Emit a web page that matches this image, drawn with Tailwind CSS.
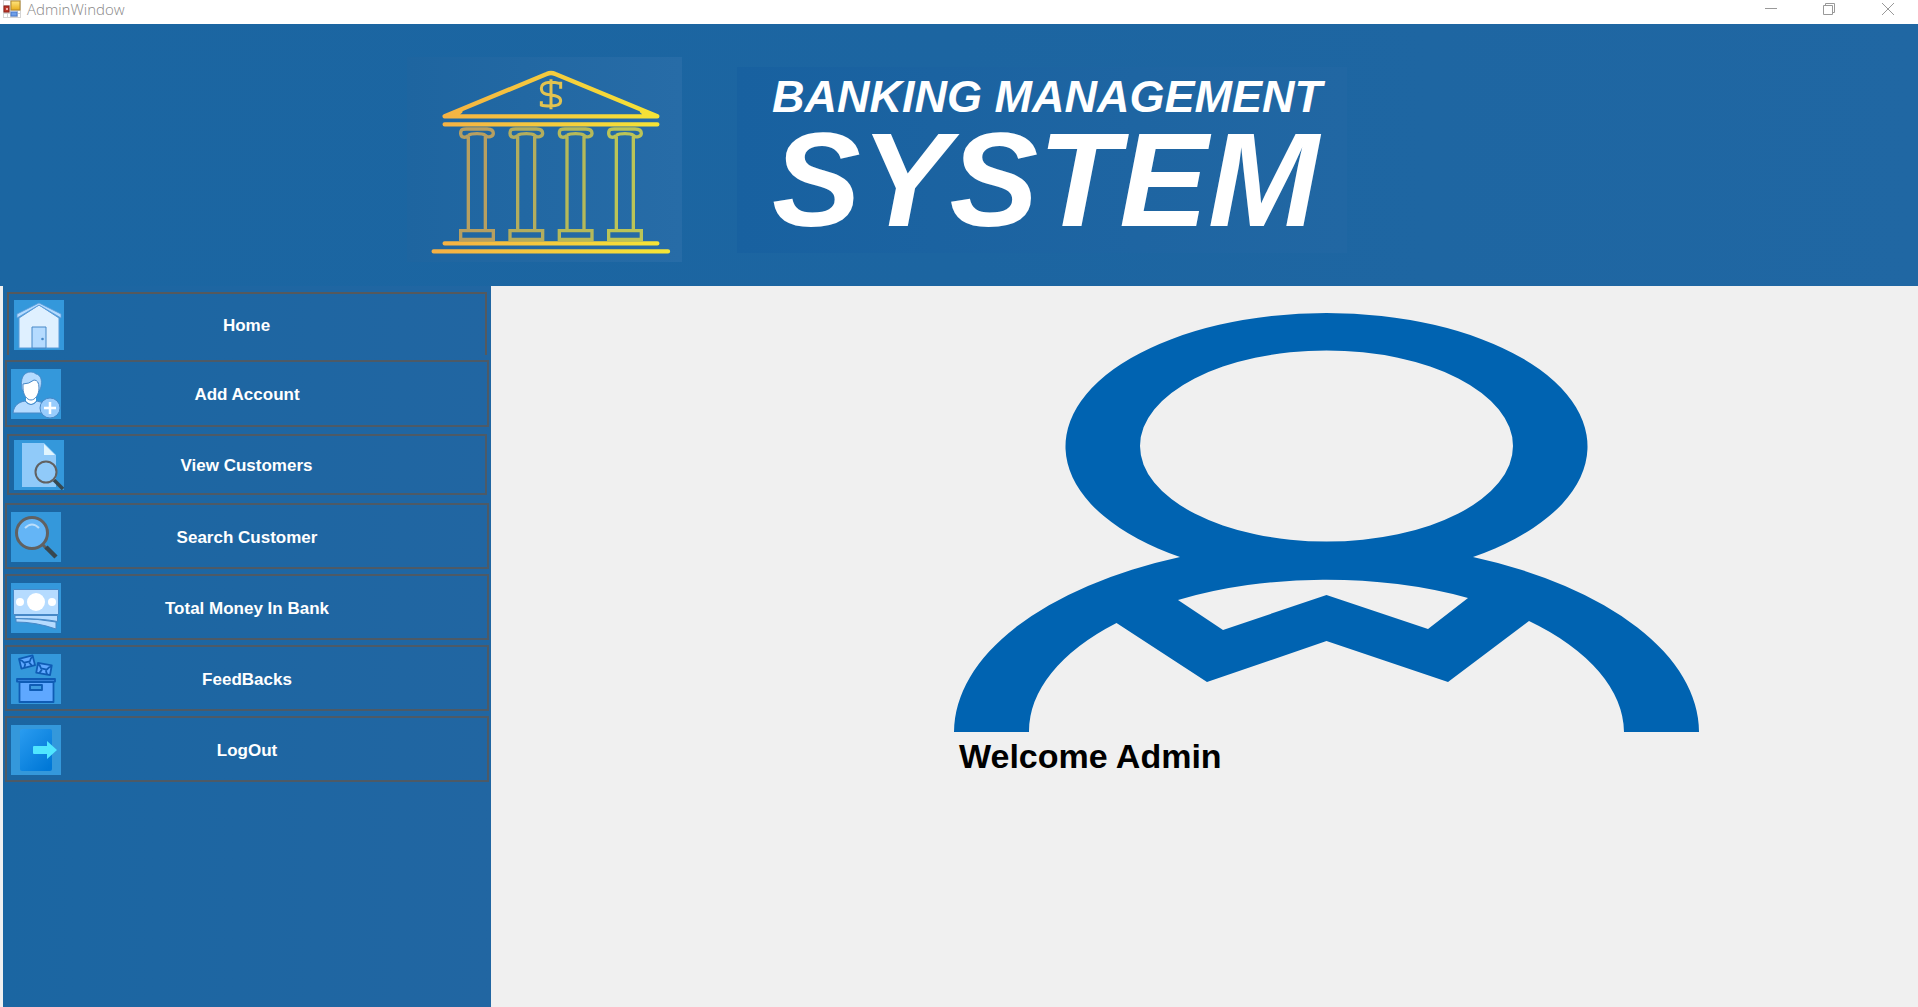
<!DOCTYPE html>
<html lang="en">
<head>
<meta charset="utf-8">
<title>AdminWindow</title>
<script src="https://cdn.jsdelivr.net/npm/@tailwindcss/browser@4"></script>
</head>
<body class="flex min-h-screen flex-col bg-[#f0f0f0] font-['Liberation_Sans',Arial,sans-serif]">

<div class="flex h-6 items-start justify-between bg-white">
  <div class="flex items-start gap-1.5 pl-[3px]">
    <svg class="h-[18px] w-[18px]" viewBox="0 0 18 18" aria-hidden="true">
      <rect width="18" height="18" fill="#d4d4d4"/>
      <path d="M1 1h6v4H1zM1 14h3v3H1zM5 14h2v3H5zM8 11h6v1H8zM15 11h2v2h-2zM15 14h2v3h-2z" fill="#fff"/>
      <rect x="8" y="1" width="9" height="9" fill="url(#gold)" stroke="#b5892b"/>
      <rect x="1" y="6" width="5" height="6" fill="#c0392b" stroke="#8f2018"/><rect x="3" y="8" width="2" height="2" fill="#f3b0a8"/>
      <rect x="8" y="12" width="6" height="4" fill="#6f9fe8" stroke="#4879cc"/>
      <defs><linearGradient id="gold" x2="0" y2="1"><stop stop-color="#ffe680"/><stop offset="1" stop-color="#e9ae1c"/></linearGradient></defs>
    </svg>
    <span class="font-['Open_Sans',sans-serif] text-[15px] font-light leading-[18px] text-[#888]">AdminWindow</span>
  </div>
  <div class="flex text-[#999]">
    <button class="grid h-[18px] w-[58px] place-items-center" aria-label="Minimize"><svg class="size-3" viewBox="0 0 12 12" fill="none" stroke="currentColor"><path d="M0 5.500h12"/></svg></button>
    <button class="grid h-[18px] w-[58px] place-items-center" aria-label="Restore"><svg class="size-3" viewBox="0 0 12 12" fill="none" stroke="currentColor"><path d="M.5 2.500h9v9h-9zM2.500 2.500v-2h9v9h-2"/></svg></button>
    <button class="grid h-[18px] w-[60px] place-items-center" aria-label="Close"><svg class="size-3" viewBox="0 0 12 12" fill="none" stroke="currentColor"><path d="M0 0l12 12M12 0L0 12"/></svg></button>
  </div>
</div>

<header class="flex h-[262px] shrink-0 items-start bg-linear-to-r from-[#1b66a2] via-[#1c65a1] to-[#2067a3] pl-[407px] pt-[33px]">
  <svg class="h-[205px] w-[275px] shrink-0 bg-linear-to-r from-[#1e65a0] to-[#276ca7]" viewBox="20 52 825 615" fill="none" stroke="url(#amber)" role="img" aria-label="Bank">
    <defs>
      <linearGradient id="amber" gradientUnits="userSpaceOnUse" x1="100" y1="0" x2="800" y2="0"><stop stop-color="#f5b044"/><stop offset="1" stop-color="#f5e636"/></linearGradient>
    </defs>
    <g stroke-width="13" stroke-linecap="round" stroke-linejoin="round">
      <path d="M133 230H771L465 103Q452 97 439 103L133 230M165 225L180 215M738 225L725 215"/>
      <path d="M133 254H771M133 611H771M100 635H803"/>
    </g>
    <g stroke-width="10" opacity=".75">
      <path d="M204 571V291M255 571V291M204 287C196 296 181 295 181 281S190 268 200 268H260C271 268 279 271 279 281S263 296 255 287Q248 282 230 282T204 287M181 573H279V599H181Z" stroke="#e9b24c"/>
      <path transform="translate(148)" d="M204 571V291M255 571V291M204 287C196 296 181 295 181 281S190 268 200 268H260C271 268 279 271 279 281S263 296 255 287Q248 282 230 282T204 287M181 573H279V599H181Z" stroke="#e3c447"/>
      <path transform="translate(296)" d="M204 571V291M255 571V291M204 287C196 296 181 295 181 281S190 268 200 268H260C271 268 279 271 279 281S263 296 255 287Q248 282 230 282T204 287M181 573H279V599H181Z" stroke="#e6d441"/>
      <path transform="translate(444)" d="M204 571V291M255 571V291M204 287C196 296 181 295 181 281S190 268 200 268H260C271 268 279 271 279 281S263 296 255 287Q248 282 230 282T204 287M181 573H279V599H181Z" stroke="#ede23d"/>
    </g>
    <path d="M452 119V209M481 147V131H477Q466 128 448 128Q423 130 423 146C423 163 438 164 452 166S481 170 481 184C481 196 468 199 450 199Q430 199 423 196V185" stroke="#e2c350" stroke-width="9"/>
  </svg>
  <h1 class="ml-[55px] mt-[10px] h-[186px] w-[610px] shrink-0 whitespace-nowrap bg-linear-to-r from-[#1861a0] to-[#2167a3] pl-[35px] pt-2 font-bold italic text-white">
    <span class="block text-[45px] leading-[44px]">BANKING MANAGEMENT</span>
    <span class="block text-[133px] leading-[122px]">SYSTEM</span>
  </h1>
</header>

<div class="flex flex-1">
  <nav class="ml-[3px] flex w-[488px] shrink-0 flex-col bg-linear-to-r from-[#1b66a2] to-[#2166a2] px-[2px] pt-[6px] text-[17px] font-bold text-white" aria-label="Main">
    <button class="mx-[2px] mb-[5px] flex h-[63px] items-center border-2 border-b-0 border-[#55595d] pl-[5px] pr-[56px]">
      <svg class="size-[50px] shrink-0 bg-[#3498db]" viewBox="0 0 50 50"><path d="M5 18L25 5l20 13v30H5z" fill="#dff0ff" stroke="#5a9bd8"/><path d="M3 18L25 5l22 13v-4L25 3 3 14z" fill="#b5dbff" stroke="#5a9bd8" stroke-width=".8"/><path d="M18 48V27h14v21z" fill="#b5dbff" stroke="#4788c7"/><circle cx="28.500" cy="39" r="1.300" fill="#4788c7"/></svg>
      <span class="flex-1 pt-[2px]">Home</span>
    </button>
    <button class="mb-[7px] flex h-[67px] items-center border-2 border-[#4d5a66] pl-1 pr-[54px]">
      <svg class="size-[50px] shrink-0 bg-[#3498db]" viewBox="0 0 50 50"><path d="M2 44C3 36 8 33 14 32q6 7 12 0 7 1 10 5v7z" fill="#b5dbff" stroke="#4788c7"/><path d="M15 29v3q5 6 10 0v-3z" fill="#fff"/><path d="M11 21C9 10 12 3 20 3q3 0 5 2c5 1 7 7 4 16z" fill="#b5dbff" stroke="#4788c7" stroke-width=".8"/><path d="M12 15q6 0 11-4 5 0 5 8c0 7-4 12-8 12s-8-5-8-12z" fill="#fff" stroke="#4788c7"/><circle cx="39" cy="39" r="10" fill="#98ccfd" stroke="#4788c7"/><path d="M39 33v12M33 39h12" stroke="#fff" stroke-width="2.500"/></svg>
      <span class="flex-1 pt-[2px]">Add Account</span>
    </button>
    <button class="mx-[2px] mb-2 flex h-[61px] items-center border-2 border-[#4d5a66] pl-[5px] pr-[56px]">
      <svg class="size-[50px] shrink-0 bg-[#3498db]" viewBox="0 0 50 50"><path d="M8 3h22l12 12v32H8z" fill="#90caf9"/><path d="M30 4v11h11z" fill="#e1f5fe"/><path d="M40 40l9 9" stroke="#37474f" stroke-width="3.500"/><circle cx="32" cy="32" r="10.500" fill="#90caf9" stroke="#616161" stroke-width="2"/></svg>
      <span class="flex-1 pt-[2px]">View Customers</span>
    </button>
    <button class="mb-[5px] flex h-[66px] items-center border-2 border-[#4d5a66] pl-1 pr-[54px] pt-[2px]">
      <svg class="size-[50px] shrink-0 bg-[#3498db]" viewBox="0 0 50 50"><path d="M31 32l5 5" stroke="#616161" stroke-width="3"/><path d="M35 35l10 10" stroke="#37474f" stroke-width="4.500"/><circle cx="21" cy="21" r="15.500" fill="#64b5f6" stroke="#616161" stroke-width="3"/><path d="M14 16q7-7 14 0" fill="none" stroke="#bbdefb" stroke-width="2"/></svg>
      <span class="flex-1 pt-[2px]">Search Customer</span>
    </button>
    <button class="mb-[5px] flex h-[66px] items-center border-2 border-[#4d5a66] pl-1 pr-[54px] pt-[2px]">
      <svg class="size-[50px] shrink-0 bg-[#3498db]" viewBox="0 0 50 50"><path d="M5 35.500q22 0 40 3.500v7Q25 39 5 39z" fill="#b5dbff" stroke="#4788c7"/><path d="M4 32.500h42.500v6Q32 35.500 4 35.500z" fill="#b5dbff" stroke="#4788c7"/><path d="M2.500 6.500h45v25h-45z" fill="#b5dbff" stroke="#4788c7"/><circle cx="25" cy="19" r="9" fill="#fff"/><circle cx="9" cy="19" r="4" fill="#fff"/><circle cx="41" cy="19" r="4" fill="#fff"/></svg>
      <span class="flex-1 pt-[2px]">Total Money In Bank</span>
    </button>
    <button class="mb-[5px] flex h-[66px] items-center border-2 border-[#4d5a66] pl-1 pr-[54px] pt-[2px]">
      <svg class="size-[50px] shrink-0 bg-[#3498db]" viewBox="0 0 50 50"><g fill="#5fa8ff" stroke="#0f5cb5" stroke-width="1.800" stroke-linejoin="round"><path d="M8.500 28h34v20h-34z"/><path d="M6 25h38v2.500H6z"/><path d="M19 31h12v5H19z" fill="#3f9be0"/><g transform="rotate(-14 16 8)"><path d="M9 3h14v10H9z"/><path d="M9 4q3 1 4 4h6q1-3 4-4M12 13l2-4M20 13l-2-4" fill="none"/></g><g transform="rotate(10 33 15)"><path d="M26 10h14v10H26z"/><path d="M26 11q3 1 4 4h6q1-3 4-4M29 20l2-4M37 20l-2-4" fill="none"/></g></g></svg>
      <span class="flex-1 pt-[2px]">FeedBacks</span>
    </button>
    <button class="flex h-[66px] items-center border-2 border-[#4d5a66] pl-1 pr-[54px] pt-[2px]">
      <svg class="size-[50px] shrink-0 bg-[#3498db]" viewBox="0 0 50 50"><defs><linearGradient id="door" x2=".8" y2="1"><stop stop-color="#2a9cf0"/><stop offset="1" stop-color="#0078d7"/></linearGradient></defs><rect x="9" y="4" width="32" height="42" rx="2" fill="url(#door)"/><path d="M22 22q0-1 1-1h13v-5l10 9-10 9v-5H23q-1 0-1-1z" fill="#50e6ff"/></svg>
      <span class="flex-1 pt-[2px]">LogOut</span>
    </button>
  </nav>

  <main class="flex-1 pl-[463px] pt-[26px]">
    <svg class="h-[420px] w-[745px]" viewBox="0 0 745 420" fill="#0063b1" role="img" aria-label="Administrator">
      <path fill-rule="evenodd" d="M226 245A261 133.500 0 1 1 519 245A372.500 191 0 0 1 745 420H670A298 153 0 0 0 575 309L494 370 372.500 329 253 370 162.500 311A298 153 0 0 0 75 420H0A372.500 191 0 0 1 226 245ZM186 134a186.500 95.500 0 1 0 373 0a186.500 95.500 0 1 0-373 0ZM224 288L269 318 372.500 283 474 317 514 286A298 153 0 0 0 224 288Z"/>
    </svg>
    <h2 class="pl-[5px] pt-1 text-[34px] font-bold leading-[40px] text-black">Welcome Admin</h2>
  </main>
</div>
</body>
</html>
